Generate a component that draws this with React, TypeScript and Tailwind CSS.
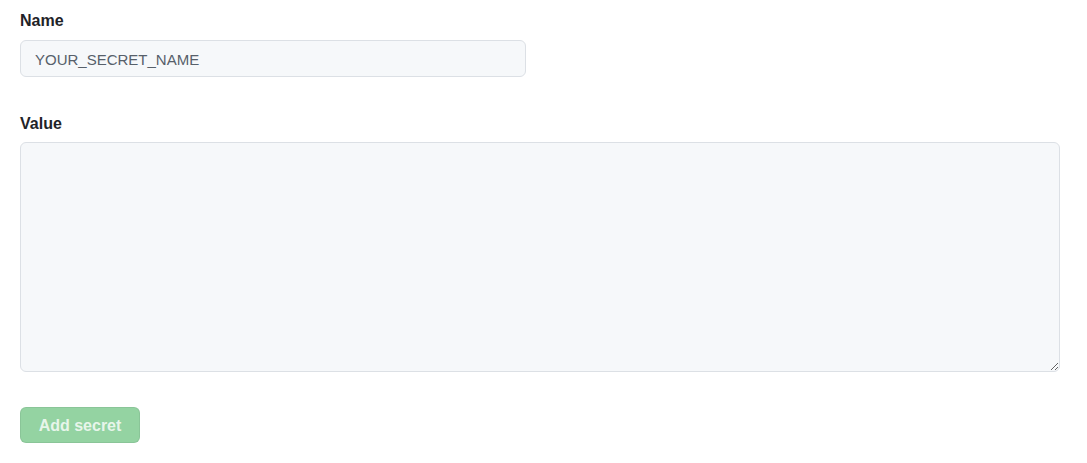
import React from 'react';

export default function App() {
  return (
    <div className="min-h-screen bg-white px-[20px] pt-[11px] text-[#1f2328]" style={{ fontFamily: '"Liberation Sans", Arial, sans-serif' }}>
      <form className="flex flex-col">
        <label htmlFor="secret-name" className="block h-[20px] text-[16px] font-bold leading-[20px]">Name</label>
        <input
          id="secret-name"
          placeholder="YOUR_SECRET_NAME"
          className="mt-[9px] h-[37px] w-[506px] rounded-[6px] border border-[#dce0e5] bg-[#f6f8fa] px-[14px] pt-[1px] text-[15px] text-[#1f2328] outline-none placeholder:text-[#57606a]"
        />
        <label htmlFor="secret-value" className="mt-[37px] block h-[20px] text-[16px] font-bold leading-[20px]">Value</label>
        <textarea
          id="secret-value"
          className="mt-[8px] h-[230px] w-[1040px] resize-y rounded-[6px] border border-[#dce0e5] bg-[#f6f8fa] px-[12px] py-[8px] text-[14px] outline-none"
        />
        <div className="mt-[35px]">
          <button
            type="button"
            disabled
            className="h-[36px] w-[120px] rounded-[6px] border border-[rgba(31,35,40,0.08)] bg-[#94d3a2] pt-[2px] text-[16px] font-bold text-[rgba(255,255,255,0.8)]"
          >
            Add secret
          </button>
        </div>
      </form>
    </div>
  );
}
